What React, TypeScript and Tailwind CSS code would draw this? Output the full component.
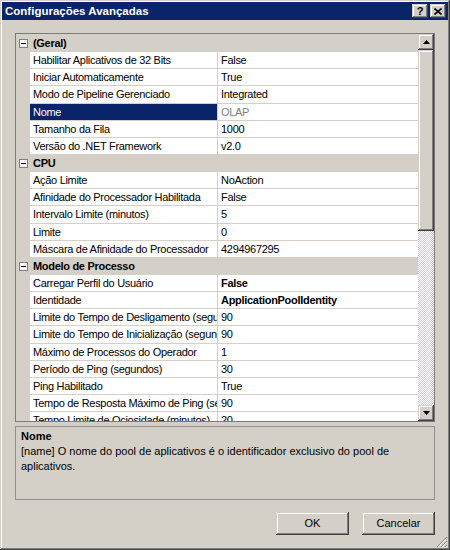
import React from 'react'

type Row =
  | { kind: 'cat'; label: string }
  | { kind: 'prop'; name: string; value: string; bold?: boolean; selected?: boolean; readonly?: boolean }

const rows: Row[] = [
  { kind: 'cat', label: '(Geral)' },
  { kind: 'prop', name: 'Habilitar Aplicativos de 32 Bits', value: 'False' },
  { kind: 'prop', name: 'Iniciar Automaticamente', value: 'True' },
  { kind: 'prop', name: 'Modo de Pipeline Gerenciado', value: 'Integrated' },
  { kind: 'prop', name: 'Nome', value: 'OLAP', selected: true, readonly: true },
  { kind: 'prop', name: 'Tamanho da Fila', value: '1000' },
  { kind: 'prop', name: 'Versão do .NET Framework', value: 'v2.0' },
  { kind: 'cat', label: 'CPU' },
  { kind: 'prop', name: 'Ação Limite', value: 'NoAction' },
  { kind: 'prop', name: 'Afinidade do Processador Habilitada', value: 'False' },
  { kind: 'prop', name: 'Intervalo Limite (minutos)', value: '5' },
  { kind: 'prop', name: 'Limite', value: '0' },
  { kind: 'prop', name: 'Máscara de Afinidade do Processador', value: '4294967295' },
  { kind: 'cat', label: 'Modelo de Processo' },
  { kind: 'prop', name: 'Carregar Perfil do Usuário', value: 'False', bold: true },
  { kind: 'prop', name: 'Identidade', value: 'ApplicationPoolIdentity', bold: true },
  { kind: 'prop', name: 'Limite do Tempo de Desligamento (segundos)', value: '90' },
  { kind: 'prop', name: 'Limite do Tempo de Inicialização (segundos)', value: '90' },
  { kind: 'prop', name: 'Máximo de Processos do Operador', value: '1' },
  { kind: 'prop', name: 'Período de Ping (segundos)', value: '30' },
  { kind: 'prop', name: 'Ping Habilitado', value: 'True' },
  { kind: 'prop', name: 'Tempo de Resposta Máximo de Ping (segundos)', value: '90' },
  { kind: 'prop', name: 'Tempo Limite de Ociosidade (minutos)', value: '20' },
]

// classic raised 3D edge
const raised =
  'bg-[#d4d0c8] shadow-[inset_-1px_-1px_#404040,inset_1px_1px_#d4d0c8,inset_-2px_-2px_#808080,inset_2px_2px_#ffffff]'

function MinusBox() {
  return (
    <div className="w-[9px] h-[9px] border border-[#808080] bg-white flex items-center justify-center">
      <div className="w-[5px] h-px bg-black" />
    </div>
  )
}

function Arrow({ up }: { up?: boolean }) {
  return (
    <svg width="7" height="4" viewBox="0 0 7 4">
      {up ? <polygon points="3.5,0 7,4 0,4" fill="#000" /> : <polygon points="0,0 7,0 3.5,4" fill="#000" />}
    </svg>
  )
}

function GridRow({ row }: { row: Row }) {
  if (row.kind === 'cat') {
    return (
      <div className="flex h-[17.15px] shrink-0 bg-[#d4d0c8]">
        <div className="w-[14px] flex items-center justify-center pl-[1px]">
          <MinusBox />
        </div>
        <span className="pl-[3px] font-bold leading-[17px]">{row.label}</span>
      </div>
    )
  }
  return (
    <div className="flex h-[17.15px] shrink-0">
      <div className="w-[14px] bg-[#d4d0c8]" />
      <div
        className={`w-[188px] border-b border-r border-[#d4d0c8] pl-[3px] leading-[16px] whitespace-nowrap overflow-hidden ${
          row.selected ? 'bg-[#0a246a] text-white' : 'bg-white text-black'
        }`}
      >
        {row.name}
      </div>
      <div
        className={`flex-1 border-b border-[#d4d0c8] bg-white pl-[3px] leading-[16px] whitespace-nowrap overflow-hidden ${
          row.readonly ? 'text-[#808080]' : 'text-black'
        } ${row.bold ? 'font-bold' : ''}`}
      >
        {row.value}
      </div>
    </div>
  )
}

export default function App() {
  return (
    <div
      className="relative w-[450px] h-[550px] bg-[#d4d0c8] p-[2px] flex flex-col text-[11px] text-black shadow-[inset_-1px_-1px_#404040,inset_1px_1px_#d4d0c8,inset_-2px_-2px_#808080,inset_2px_2px_#ffffff]"
      style={{ fontFamily: '"Liberation Sans", Arial, sans-serif' }}
    >
      {/* Title bar */}
      <div className="h-[18px] bg-[#0a246a] flex items-center pl-[3px] pr-[2px]">
        <span className="flex-1 text-white font-bold text-[11.5px] leading-[18px]">Configurações Avançadas</span>
        <div className="flex gap-[2px]">
          <div className={`w-[16px] h-[14px] flex items-center justify-center font-bold text-[11px] leading-none ${raised}`}>
            ?
          </div>
          <div className={`w-[16px] h-[14px] flex items-center justify-center ${raised}`}>
            <svg width="8" height="7" viewBox="0 0 8 7">
              <path d="M0.5 0.5 L7.5 6.5 M7.5 0.5 L0.5 6.5" stroke="#000" strokeWidth="1.6" />
            </svg>
          </div>
        </div>
      </div>

      <div className="flex-1 flex flex-col px-[13px]">
        {/* Property grid */}
        <div className="mt-[13px] h-[389px] border border-[#7a7a7a] flex bg-[#d4d0c8]">
          <div className="flex-1 flex flex-col overflow-hidden pt-px tracking-[-0.3px]">
            {rows.map((r, i) => (
              <GridRow key={i} row={r} />
            ))}
          </div>
          <div className="w-[16px] flex flex-col">
            <div className={`h-[16px] flex items-center justify-center ${raised}`}>
              <Arrow up />
            </div>
            <div className={`h-[181px] ${raised}`} />
            <div className="flex-1 bg-[image:repeating-conic-gradient(#ffffff_0%_25%,#d4d0c8_0%_50%)] bg-[length:2px_2px]" />
            <div className={`h-[16px] flex items-center justify-center ${raised}`}>
              <Arrow />
            </div>
          </div>
        </div>

        {/* Description */}
        <div className="mt-[4px] h-[74px] border border-[#909090] px-[5px] pt-[2px] leading-[15px]">
          <div className="font-bold">Nome</div>
          <div className="whitespace-nowrap">
            [name] O nome do pool de aplicativos é o identificador exclusivo do pool de
            <br />
            aplicativos.
          </div>
        </div>

        {/* Buttons */}
        <div className="mt-[12px] flex justify-end gap-[13px]">
          <div className={`w-[73px] h-[23px] flex items-center justify-center ${raised}`}>OK</div>
          <div className={`w-[73px] h-[23px] flex items-center justify-center ${raised}`}>Cancelar</div>
        </div>
      </div>

      {/* Resize grip */}
      <svg className="absolute right-[2px] bottom-[2px]" width="12" height="12" viewBox="0 0 12 12">
        <path d="M11 1 L1 11 M11 5 L5 11 M11 9 L9 11" stroke="#808080" strokeWidth="1" />
        <path d="M11 2 L2 11 M11 6 L6 11 M11 10 L10 11" stroke="#ffffff" strokeWidth="1" />
      </svg>
    </div>
  )
}
